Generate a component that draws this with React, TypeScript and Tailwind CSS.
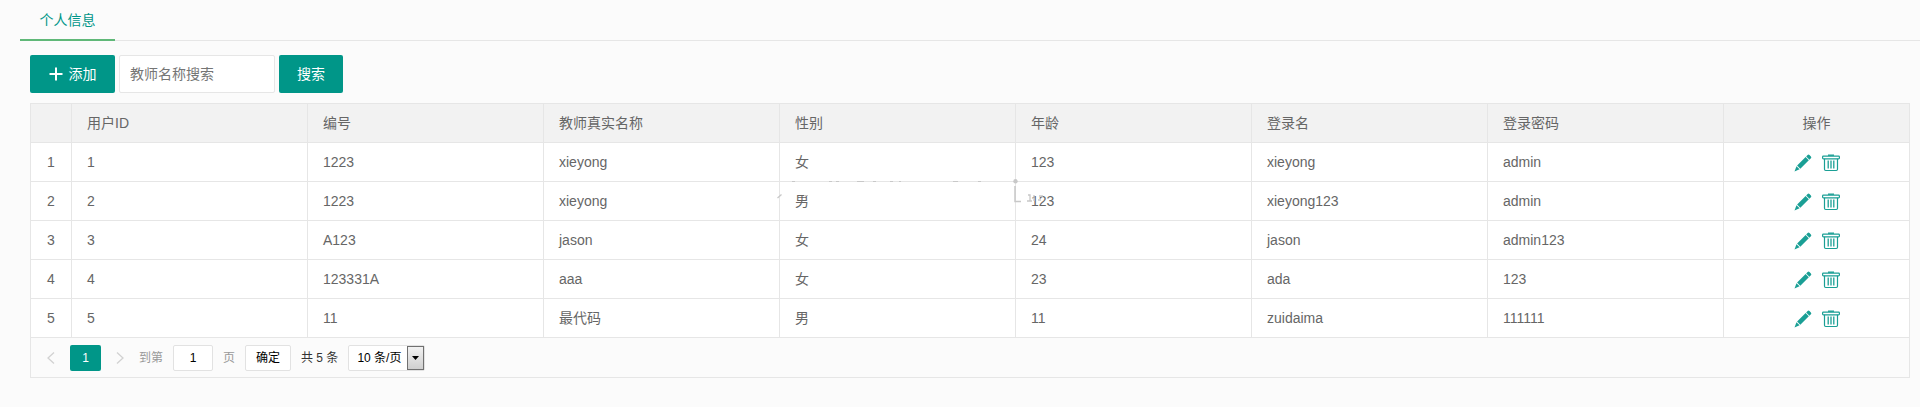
import React from 'react';

type Teacher = {
    id: number;
    code: string;
    realName: string;
    gender: string;
    age: number;
    loginName: string;
    password: string;
};

const COLUMNS = ['用户ID', '编号', '教师真实名称', '性别', '年龄', '登录名', '登录密码'];

const TEACHERS: Teacher[] = [
    { id: 1, code: '1223', realName: 'xieyong', gender: '女', age: 123, loginName: 'xieyong', password: 'admin' },
    { id: 2, code: '1223', realName: 'xieyong', gender: '男', age: 123, loginName: 'xieyong123', password: 'admin' },
    { id: 3, code: 'A123', realName: 'jason', gender: '女', age: 24, loginName: 'jason', password: 'admin123' },
    { id: 4, code: '123331A', realName: 'aaa', gender: '女', age: 23, loginName: 'ada', password: '123' },
    { id: 5, code: '11', realName: '最代码', gender: '男', age: 11, loginName: 'zuidaima', password: '111111' },
];

const PencilIcon = () => (
    <svg viewBox="0 0 18 18" className="size-[18px]" fill="currentColor" aria-hidden="true">
        <path d="M12.2 2.5 13.6 1q1-.9 1.9 0l1.4 1.4q.9.9 0 1.9l-1.5 1.4z" />
        <path d="m11.6 3.1 3.2 3.2-8.5 8.4-3.2-3.1z" />
        <path d="m2.5 12.3 3.1 3L.5 17.6z" />
    </svg>
);

const TrashIcon = () => (
    <svg viewBox="0 0 18 18" className="size-[18px]" fill="none" stroke="currentColor" aria-hidden="true">
        <path d="M6 1.2h6" strokeWidth="1.4" />
        <rect x=".6" y="2.2" width="16.8" height="2.6" rx=".8" strokeWidth="1.2" />
        <path d="M2.5 4.7v10.6q0 1.2 1.2 1.2h10.6q1.2 0 1.2-1.2V4.7" strokeWidth="1.2" />
        <path d="M6.2 6.5v8M9 6.5v8M11.8 6.5v8" strokeWidth="1.3" />
    </svg>
);

// Faint leftovers of the site watermark behind the rows
const Watermark = () => (
    <svg viewBox="0 0 270 26" className="pointer-events-none absolute top-[75px] left-[746px] h-[26px] w-[270px]" fill="none" stroke="#c8c8c8" aria-hidden="true">
        <path d="M15 2.5h3M52 2.5h3M59 2.5h3M80 2.5h7M96 2.5h3M113 2.5h3M122 2.5h2M176 2.5h5M201 2.5h3" />
        <path d="m.5 19 4-3.5" strokeWidth="1.3" />
        <path d="M27 16.5h4" />
        <circle cx="238.5" cy="2.3" r="2.2" fill="#c8c8c8" stroke="none" />
        <path d="M238 7v15.500h6" strokeWidth="1.5" />
        <path d="M251 16h2v6M250 22h5M257 16v6M262 17h4M261 21h3" strokeWidth="1.3" />
    </svg>
);

const App: React.FC = () => {
    return (
        <div className="min-h-screen bg-[#fbfbfb] pl-5 font-['Liberation_Sans','Noto_Sans_CJK_SC',sans-serif] text-sm text-[#666]">
            <nav className="flex h-[41px] border-b border-[#e6e6e6]">
                <a href="#info" className="h-[41px] w-[95px] border-b-2 border-[#5fb878] text-center leading-10 text-[#009688]">个人信息</a>
            </nav>

            <main className="pt-3.5 pr-2.5 pl-2.5">
                <form className="flex gap-1" onSubmit={(e) => e.preventDefault()}>
                    <button type="button" className="flex h-[38px] w-[85px] items-center justify-center gap-1.5 rounded-xs bg-[#009688] text-white">
                        <svg viewBox="0 0 14 14" className="size-3.5" stroke="currentColor" strokeWidth="2" aria-hidden="true">
                            <path d="M7 .5v13M.5 7h13" />
                        </svg>
                        添加
                    </button>
                    <input
                        type="text"
                        aria-label="教师名称搜索"
                        placeholder="教师名称搜索"
                        className="h-[38px] w-[156px] rounded-xs border border-[#e6e6e6] bg-white px-2.5 outline-none placeholder:text-[#757575]"
                    />
                    <button type="submit" className="h-[38px] w-16 rounded-xs bg-[#009688] text-white">搜索</button>
                </form>

                <div className="relative mt-2.5 border border-[#e6e6e6]">
                    <table className="w-full table-fixed border-separate border-spacing-0 text-left">
                        <thead className="bg-[#f2f2f2]">
                            <tr className="h-[39px]">
                                <th className="w-[41px] border-r border-b border-[#e6e6e6]"></th>
                                {COLUMNS.map((title) => (
                                    <th key={title} className="border-r border-b border-[#e6e6e6] px-[15px] font-normal">{title}</th>
                                ))}
                                <th className="w-[185px] border-b border-[#e6e6e6] text-center font-normal">操作</th>
                            </tr>
                        </thead>
                        <tbody className="bg-white">
                            {TEACHERS.map((t, index) => (
                                <tr key={t.id} className="h-[39px]">
                                    <td className="border-r border-b border-[#e6e6e6] text-center">{index + 1}</td>
                                    {[t.id, t.code, t.realName, t.gender, t.age, t.loginName, t.password].map((value, i) => (
                                        <td key={i} className="border-r border-b border-[#e6e6e6] px-[15px]">{value}</td>
                                    ))}
                                    <td className="border-b border-[#e6e6e6]">
                                        <div className="flex justify-center gap-2.5 pt-0.5 text-[#1a9f95]">
                                            <button type="button" aria-label="编辑"><PencilIcon /></button>
                                            <button type="button" aria-label="删除"><TrashIcon /></button>
                                        </div>
                                    </td>
                                </tr>
                            ))}
                        </tbody>
                    </table>
                    <Watermark />

                    <div className="flex h-[39px] items-center pl-2 text-xs text-[#333]">
                        <button type="button" aria-label="上一页" className="flex h-[26px] w-[31px] items-center pl-2 text-[#d2d2d2]">
                            <svg viewBox="0 0 8 12" className="h-3 w-2" fill="none" stroke="currentColor" strokeWidth="1.3"><path d="M7 .5 1 6l6 5.5" /></svg>
                        </button>
                        <button type="button" className="h-[26px] w-[31px] rounded-xs bg-[#009688] text-white">1</button>
                        <button type="button" aria-label="下一页" className="flex h-[26px] w-[38px] items-center justify-center text-[#d2d2d2]">
                            <svg viewBox="0 0 8 12" className="h-3 w-2" fill="none" stroke="currentColor" strokeWidth="1.3"><path d="m1 .5 6 5.5-6 5.5" /></svg>
                        </button>
                        <label className="flex items-center gap-2.5 text-[#999]">
                            到第
                            <input type="text" defaultValue="1" className="h-[26px] w-10 rounded-xs border border-[#e2e2e2] bg-white text-center text-black outline-none" />
                            页
                        </label>
                        <button type="button" className="ml-2.5 h-[26px] w-[46px] rounded-xs border border-[#e2e2e2] bg-white text-black">确定</button>
                        <span className="ml-2.5">共 5 条</span>
                        <div className="relative ml-2.5">
                            <select aria-label="每页条数" className="block h-[26px] w-[77px] appearance-none rounded-xs border border-[#e2e2e2] bg-white pl-2 text-black outline-none">
                                <option>10 条/页</option>
                                <option>20 条/页</option>
                            </select>
                            <span className="pointer-events-none absolute top-px right-px flex h-6 w-[17px] items-center justify-center border border-[#707070] bg-linear-to-b from-[#f2f2f2] to-[#cfcfcf]">
                                <svg viewBox="0 0 7 4" className="h-1 w-[7px]" fill="#000"><path d="M0 0h7L3.5 4z" /></svg>
                            </span>
                        </div>
                    </div>
                </div>
            </main>
        </div>
    );
};

export default App;
